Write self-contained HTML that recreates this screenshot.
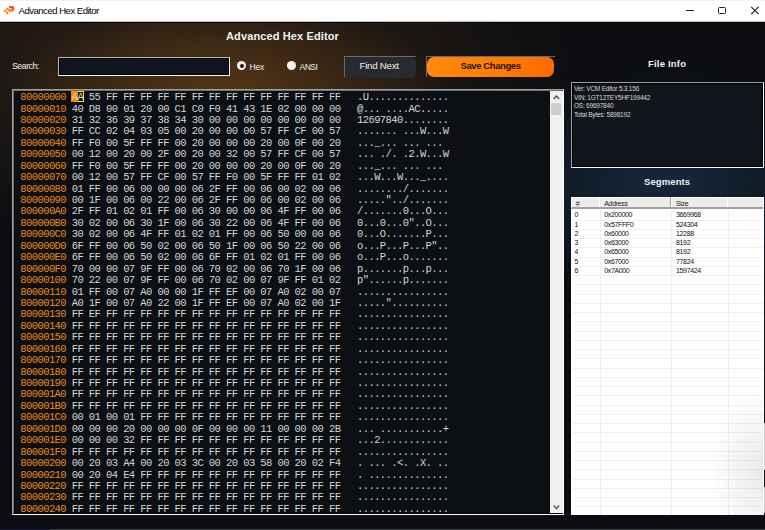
<!DOCTYPE html>
<html><head><meta charset="utf-8">
<style>
*{margin:0;padding:0;box-sizing:border-box}
html,body{width:765px;height:530px;overflow:hidden;background:#0b0e13}
body{position:relative;font-family:"Liberation Sans",sans-serif}
.a{position:absolute}
#tb{left:0;top:0;width:765px;height:21px;background:#fff;border-top:1px solid #f2f2f2}
#tbt{left:18.5px;top:5px;font-size:9.6px;color:#000;letter-spacing:-0.52px;line-height:12px;white-space:nowrap}
#main{left:0;top:21px;width:765px;height:509px;
 background:
  radial-gradient(ellipse 230px 85px at 228px 72px, rgba(125,75,20,0.5), rgba(125,75,20,0) 100%),
  radial-gradient(ellipse 400px 190px at 190px 40px, rgba(58,40,22,0.8), rgba(58,40,22,0) 100%),
  radial-gradient(ellipse 210px 115px at 665px 162px, rgba(26,48,74,0.75), rgba(26,48,74,0) 100%),
  #0b0d11;}
#h1{left:226px;top:29px;font-size:11px;font-weight:bold;color:#f2f2f2;letter-spacing:0.12px;line-height:14px;white-space:nowrap}
#slbl{left:12px;top:61.3px;font-size:8.8px;color:#ececec;line-height:10px;letter-spacing:-0.5px}
#sbox{left:58px;top:57px;width:172px;height:19px;background:#111520;border-style:solid;border-width:1px;border-color:#b4b4b4 #f4f4f4 #f4f4f4 #b4b4b4;box-shadow:inset 1px 1px 0 #000,inset -1px -1px 0 #000}
.radio{width:9px;height:9px;border-radius:50%;background:#f4f4f4}
.radio.on::after{content:"";position:absolute;left:2.5px;top:2.5px;width:4px;height:4px;border-radius:50%;background:#111}
#rhex{left:237.3px;top:61.3px}
#rhext{left:249.5px;top:61.8px;font-size:8.6px;color:#ececec;line-height:10px;letter-spacing:-0.3px}
#ransi{left:287.2px;top:61.3px}
#ransit{left:299.5px;top:61.8px;font-size:8.6px;color:#ececec;line-height:10px;letter-spacing:-0.55px}
#fnb{left:344px;top:56px;width:72px;height:21px;border-top:1px solid #6a6a6a;border-left:1px solid #6a6a6a}
#fnbi{left:344.5px;top:56.5px;width:71px;height:21px;background:#272b30;border-radius:6px}
#fnt{left:359.5px;top:60px;font-size:9.8px;color:#ececec;letter-spacing:-0.3px;line-height:12px;white-space:nowrap}
#svb{left:426px;top:56px;width:129px;height:21px;border-top:1px solid #6a6a6a;border-left:1px solid #6a6a6a}
#svbi{left:427px;top:57px;width:127px;height:20px;background:linear-gradient(90deg,#ff8a0a,#ff7a00 60%,#ff6a00);border-radius:7px}
#svt{left:460.5px;top:60px;font-size:9.4px;font-weight:bold;color:#141414;letter-spacing:-0.33px;line-height:12px;white-space:nowrap}
#fit{left:648px;top:58px;font-size:9.5px;font-weight:bold;color:#f0f0f0;letter-spacing:0.2px;line-height:12px;white-space:nowrap}
#fib{left:571px;top:82px;width:193px;height:86px;background:#12151c;border-style:solid;border-width:1px;border-color:#a0a0a0 #fff #fff #a0a0a0}
#fibi{left:572px;top:83px;width:191px;height:84px;border-style:solid;border-width:1px;border-color:#000 #000 #000 #000}
#fitxt{left:574px;top:85.3px;font-size:6.5px;color:#d6d6d6;letter-spacing:-0.22px;line-height:8.6px;white-space:nowrap}
#sgt{left:644px;top:176px;font-size:9.5px;font-weight:bold;color:#f0f0f0;letter-spacing:0.1px;line-height:12px;white-space:nowrap}
#sgb{left:571px;top:197px;width:193px;height:318px;background:#fff;overflow:hidden;border-right:1px solid #fff}
#hdr{left:0;top:0;width:192px;height:11.8px;background:#ececec;border-bottom:2px solid #a0a0a0;border-top:1px solid #fafafa;border-left:1px solid #fafafa}
.hsep{top:0;width:1.5px;height:10px;background:#a0a0a0;border-right:1px solid #fff}
.htx{top:3px;font-size:7px;color:#1a1a1a;line-height:8px;letter-spacing:-0.3px;white-space:nowrap}
#grid{left:2px;top:13.3px;width:190px;height:306px;
 background:linear-gradient(90deg, transparent 27px, #eeeeee 27px, #eeeeee 28px, transparent 28px, transparent 98px, #eeeeee 98px, #eeeeee 99px, transparent 99px, transparent 155px, #eeeeee 155px, #eeeeee 156px, transparent 156px)}
.gl{left:2px;width:190px;height:1px;background:#f0f0f0}
.srt{font-size:7px;color:#111;line-height:8px;letter-spacing:-0.35px;white-space:nowrap}
#hexb{left:12px;top:89px;width:552px;height:426px;background:#0c0f14;border-style:solid;border-width:1px;border-color:#a0a0a0 #fff #fff #a0a0a0}
#hexbi{left:13px;top:90px;width:550px;height:424px;border-style:solid;border-width:1px;border-color:#707070 #000 #000 #707070}
.mono{font-family:"Liberation Mono",monospace;font-size:10.5px;letter-spacing:-0.585px;line-height:11.43px;white-space:nowrap}
#addr{left:20.3px;top:92.1px;color:#ec8a16}
#hex{left:71.7px;top:92.1px;color:#d6d6d6}
#asc{left:357px;top:92.1px;color:#d6d6d6}
#sb{left:550px;top:91px;width:13px;height:422px;background:#f0f0f0}
#thumb{left:551px;top:103px;width:10.3px;height:11.7px;background:#cdcdcd}
#bl{left:0;top:529px;width:765px;height:1px;background:#3a3d44}
#bl2{left:0;top:529px;width:50px;height:1px;background:#1a1a40}
</style></head><body>
<div class="a" id="tb"></div>
<svg class="a" style="left:0;top:0" width="20" height="20" viewBox="0 0 20 20">
 <defs><linearGradient id="ig" x1="0" y1="0" x2="0" y2="1"><stop offset="0" stop-color="#f2400a"/><stop offset="1" stop-color="#ff7d12"/></linearGradient></defs>
 <path d="M9.2 7.1 H11.8 Q13.2 7.1 13.2 8.8 Q13.2 10.5 11.8 10.5 H8.3" fill="none" stroke="url(#ig)" stroke-width="2.3"/>
 <rect x="6.6" y="7.9" width="1.8" height="1.9" fill="#f86a10"/>
 <rect x="4.1" y="9.8" width="2.2" height="2" fill="#ff7a12"/>
 <path d="M6.2 11.6 H8.3 L7.6 14.3 H6.2 Z" fill="#ff7d12"/>
</svg>
<div class="a" id="tbt">Advanced Hex Editor</div>
<div class="a" style="left:686px;top:10px;width:8px;height:1px;background:#222"></div>
<div class="a" style="left:718px;top:6.8px;width:8px;height:7px;border:1px solid #222;border-radius:1.5px"></div>
<svg class="a" style="left:750px;top:6px" width="10" height="9" viewBox="0 0 10 9"><path d="M1.2 0.9 L8.6 8.1 M8.6 0.9 L1.2 8.1" stroke="#111" stroke-width="1.05"/></svg>
<div class="a" id="main"></div>
<div class="a" style="left:0;top:21px;width:765px;height:1px;background:#bdbab7"></div><div class="a" style="left:0;top:22px;width:765px;height:1px;background:#0e0b09"></div>
<div class="a" id="h1">Advanced Hex Editor</div>
<div class="a" id="slbl">Search:</div>
<div class="a" id="sbox"></div>
<div class="a radio on" id="rhex"></div>
<div class="a" id="rhext">Hex</div>
<div class="a radio" id="ransi"></div>
<div class="a" id="ransit">ANSI</div>
<div class="a" id="fnb"></div><div class="a" id="fnbi"></div>
<div class="a" id="fnt">Find Next</div>
<div class="a" id="svb"></div><div class="a" id="svbi"></div>
<div class="a" id="svt">Save Changes</div>
<div class="a" id="fit">File Info</div>
<div class="a" id="fib"></div><div class="a" id="fibi"></div>
<div class="a" id="fitxt">Ver: VCM Editor 5.3.156<br>VIN: 1GT12TEY5HF199442<br>OS: 69697840<br>Total Bytes: 5898192</div>
<div class="a" id="sgt">Segments</div>
<div class="a" id="sgb">
 <div class="a" id="hdr"></div>
 <div class="a hsep" style="left:27.8px"></div><div class="a hsep" style="left:99px"></div><div class="a hsep" style="left:155.8px"></div>
 <div class="a htx" style="left:4.8px">#</div><div class="a htx" style="left:33.2px">Address</div><div class="a htx" style="left:105px">Size</div>
 <div class="a" id="grid"></div>
<div class="a srt" style="left:3.4px;top:14.30px">0</div><div class="a srt" style="left:33.2px;top:14.30px">0x200000</div><div class="a srt" style="left:105px;top:14.30px">3669968</div>
<div class="a srt" style="left:3.4px;top:23.55px">1</div><div class="a srt" style="left:33.2px;top:23.55px">0x57FFF0</div><div class="a srt" style="left:105px;top:23.55px">524304</div>
<div class="a srt" style="left:3.4px;top:32.80px">2</div><div class="a srt" style="left:33.2px;top:32.80px">0x60000</div><div class="a srt" style="left:105px;top:32.80px">12288</div>
<div class="a srt" style="left:3.4px;top:42.05px">3</div><div class="a srt" style="left:33.2px;top:42.05px">0x63000</div><div class="a srt" style="left:105px;top:42.05px">8192</div>
<div class="a srt" style="left:3.4px;top:51.30px">4</div><div class="a srt" style="left:33.2px;top:51.30px">0x65000</div><div class="a srt" style="left:105px;top:51.30px">8192</div>
<div class="a srt" style="left:3.4px;top:60.55px">5</div><div class="a srt" style="left:33.2px;top:60.55px">0x67000</div><div class="a srt" style="left:105px;top:60.55px">77824</div>
<div class="a srt" style="left:3.4px;top:69.80px">6</div><div class="a srt" style="left:33.2px;top:69.80px">0x7A000</div><div class="a srt" style="left:105px;top:69.80px">1597424</div>
<div class="a gl" style="top:22.50px"></div><div class="a gl" style="top:31.75px"></div><div class="a gl" style="top:41.00px"></div><div class="a gl" style="top:50.25px"></div><div class="a gl" style="top:59.50px"></div><div class="a gl" style="top:68.75px"></div><div class="a gl" style="top:78.00px"></div><div class="a gl" style="top:87.25px"></div><div class="a gl" style="top:96.50px"></div><div class="a gl" style="top:105.75px"></div><div class="a gl" style="top:115.00px"></div><div class="a gl" style="top:124.25px"></div><div class="a gl" style="top:133.50px"></div><div class="a gl" style="top:142.75px"></div><div class="a gl" style="top:152.00px"></div><div class="a gl" style="top:161.25px"></div><div class="a gl" style="top:170.50px"></div><div class="a gl" style="top:179.75px"></div><div class="a gl" style="top:189.00px"></div><div class="a gl" style="top:198.25px"></div><div class="a gl" style="top:207.50px"></div><div class="a gl" style="top:216.75px"></div><div class="a gl" style="top:226.00px"></div><div class="a gl" style="top:235.25px"></div><div class="a gl" style="top:244.50px"></div><div class="a gl" style="top:253.75px"></div><div class="a gl" style="top:263.00px"></div><div class="a gl" style="top:272.25px"></div><div class="a gl" style="top:281.50px"></div><div class="a gl" style="top:290.75px"></div><div class="a gl" style="top:300.00px"></div><div class="a gl" style="top:309.25px"></div>
 <div class="a" style="left:130px;top:170px;width:63px;height:150px;background:radial-gradient(ellipse 55px 85px at 100% 70%, rgba(0,0,0,0.085), rgba(0,0,0,0) 100%)"></div>
</div>
<div class="a" id="hexb"></div><div class="a" id="hexbi"></div>
<div class="a" style="left:77.6px;top:90.5px;width:6px;height:11.8px;border:1px solid #fff000;border-left:none"></div>
<div class="a" style="left:71px;top:90.5px;width:7px;height:11.8px;background:#fb8800"></div>
<div class="a mono" id="addr">80000000<br>80000010<br>80000020<br>80000030<br>80000040<br>80000050<br>80000060<br>80000070<br>80000080<br>80000090<br>800000A0<br>800000B0<br>800000C0<br>800000D0<br>800000E0<br>800000F0<br>80000100<br>80000110<br>80000120<br>80000130<br>80000140<br>80000150<br>80000160<br>80000170<br>80000180<br>80000190<br>800001A0<br>800001B0<br>800001C0<br>800001D0<br>800001E0<br>800001F0<br>80000200<br>80000210<br>80000220<br>80000230<br>80000240</div>
<div class="a mono" id="hex">AA 55 FF FF FF FF FF FF FF FF FF FF FF FF FF FF<br>40 D8 00 01 20 00 C1 C0 F0 41 43 1E 02 00 00 00<br>31 32 36 39 37 38 34 30 00 00 00 00 00 00 00 00<br>FF CC 02 04 03 05 00 20 00 00 00 57 FF CF 00 57<br>FF F0 00 5F FF FF 00 20 00 00 00 20 00 0F 00 20<br>00 12 00 20 00 2F 00 20 00 32 00 57 FF CF 00 57<br>FF F0 00 5F FF FF 00 20 00 00 00 20 00 0F 00 20<br>00 12 00 57 FF CF 00 57 FF F0 00 5F FF FF 01 02<br>01 FF 00 06 00 00 00 06 2F FF 00 06 00 02 00 06<br>00 1F 00 06 00 22 00 06 2F FF 00 06 00 02 00 06<br>2F FF 01 02 01 FF 00 06 30 00 00 06 4F FF 00 06<br>30 02 00 06 30 1F 00 06 30 22 00 06 4F FF 00 06<br>30 02 00 06 4F FF 01 02 01 FF 00 06 50 00 00 06<br>6F FF 00 06 50 02 00 06 50 1F 00 06 50 22 00 06<br>6F FF 00 06 50 02 00 06 6F FF 01 02 01 FF 00 06<br>70 00 00 07 9F FF 00 06 70 02 00 06 70 1F 00 06<br>70 22 00 07 9F FF 00 06 70 02 00 07 9F FF 01 02<br>01 FF 00 07 A0 00 00 1F FF EF 00 07 A0 02 00 07<br>A0 1F 00 07 A0 22 00 1F FF EF 00 07 A0 02 00 1F<br>FF EF FF FF FF FF FF FF FF FF FF FF FF FF FF FF<br>FF FF FF FF FF FF FF FF FF FF FF FF FF FF FF FF<br>FF FF FF FF FF FF FF FF FF FF FF FF FF FF FF FF<br>FF FF FF FF FF FF FF FF FF FF FF FF FF FF FF FF<br>FF FF FF FF FF FF FF FF FF FF FF FF FF FF FF FF<br>FF FF FF FF FF FF FF FF FF FF FF FF FF FF FF FF<br>FF FF FF FF FF FF FF FF FF FF FF FF FF FF FF FF<br>FF FF FF FF FF FF FF FF FF FF FF FF FF FF FF FF<br>FF FF FF FF FF FF FF FF FF FF FF FF FF FF FF FF<br>00 01 00 01 FF FF FF FF FF FF FF FF FF FF FF FF<br>00 00 00 20 00 00 00 0F 00 00 00 11 00 00 00 2B<br>00 00 00 32 FF FF FF FF FF FF FF FF FF FF FF FF<br>FF FF FF FF FF FF FF FF FF FF FF FF FF FF FF FF<br>00 20 03 A4 00 20 03 3C 00 20 03 58 00 20 02 F4<br>00 20 04 E4 FF FF FF FF FF FF FF FF FF FF FF FF<br>FF FF FF FF FF FF FF FF FF FF FF FF FF FF FF FF<br>FF FF FF FF FF FF FF FF FF FF FF FF FF FF FF FF<br>FF FF FF FF FF FF FF FF FF FF FF FF FF FF FF FF</div>
<div class="a mono" id="asc">.U..............<br>@...&nbsp;....AC.....<br>12697840........<br>.......&nbsp;...W...W<br>..._...&nbsp;...&nbsp;...&nbsp;<br>...&nbsp;./.&nbsp;.2.W...W<br>..._...&nbsp;...&nbsp;...&nbsp;<br>...W...W..._....<br>......../.......<br>.....&quot;../.......<br>/.......0...O...<br>0...0...0&quot;..O...<br>0...O.......P...<br>o...P...P...P&quot;..<br>o...P...o.......<br>p.......p...p...<br>p&quot;......p.......<br>................<br>.....&quot;..........<br>................<br>................<br>................<br>................<br>................<br>................<br>................<br>................<br>................<br>................<br>...&nbsp;...........+<br>...2............<br>................<br>.&nbsp;...&nbsp;.&lt;.&nbsp;.X.&nbsp;..<br>.&nbsp;..............<br>................<br>................<br>................</div>
<div class="a" id="sb"></div>
<div class="a" id="thumb"></div>
<svg class="a" style="left:552px;top:94px" width="9" height="6" viewBox="0 0 9 6"><path d="M1.6 5 L4.4 2 L7.2 5" fill="none" stroke="#505050" stroke-width="1.3"/></svg>
<svg class="a" style="left:552px;top:504px" width="9" height="6" viewBox="0 0 9 6"><path d="M1.6 1.5 L4.4 4.5 L7.2 1.5" fill="none" stroke="#505050" stroke-width="1.3"/></svg>
<div class="a" style="left:764px;top:423px;width:1px;height:47px;background:#d4d4d4"></div><div class="a" style="left:764px;top:487px;width:1px;height:26px;background:#d4d4d4"></div>
<div class="a" id="bl"></div><div class="a" id="bl2"></div>
</body></html>
